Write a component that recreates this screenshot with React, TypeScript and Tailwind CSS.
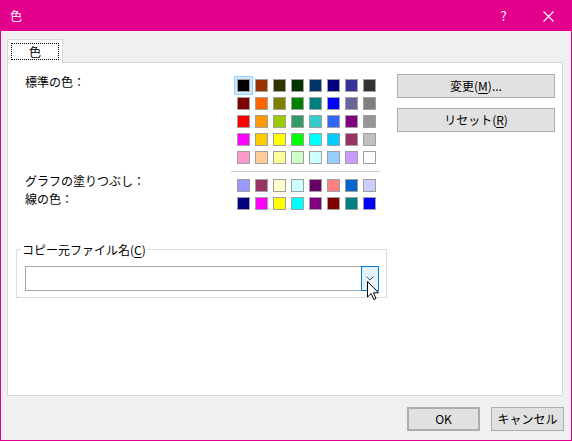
import React from "react";

const standardColors = [
	["#000000", "#993300", "#333300", "#003300", "#003366", "#000080", "#333399", "#333333"],
	["#800000", "#ff6600", "#808000", "#008000", "#008080", "#0000ff", "#666699", "#808080"],
	["#ff0000", "#ff9900", "#99cc00", "#339966", "#33cccc", "#3366ff", "#800080", "#969696"],
	["#ff00ff", "#ffcc00", "#ffff00", "#00ff00", "#00ffff", "#00ccff", "#993366", "#c0c0c0"],
	["#ff99cc", "#ffcc99", "#ffff99", "#ccffcc", "#ccffff", "#99ccff", "#cc99ff", "#ffffff"],
];

const chartColors = [
	["#9999ff", "#993366", "#ffffcc", "#ccffff", "#660066", "#ff8080", "#0066cc", "#ccccff"],
	["#000080", "#ff00ff", "#ffff00", "#00ffff", "#800080", "#800000", "#008080", "#0000ff"],
];

function Swatch({ color, selected }: { color: string; selected?: boolean }) {
	return (
		<div className="relative w-[13px] h-[13px]">
			{selected && (
				<div className="absolute -inset-[3px] border border-[#99d1ff] bg-[#cce8ff]" />
			)}
			<div
				className="relative w-[13px] h-[13px] border border-[#a0a0a0]"
				style={{ backgroundColor: color }}
			/>
		</div>
	);
}

function SwatchRows({ rows, first }: { rows: string[][]; first?: boolean }) {
	return (
		<div className="flex flex-col gap-[5px]">
			{rows.map((row, r) => (
				<div key={r} className="flex gap-[5px]">
					{row.map((c, i) => (
						<Swatch key={i} color={c} selected={first && r === 0 && i === 0} />
					))}
				</div>
			))}
		</div>
	);
}

function Btn({ children, className = "" }: { children: React.ReactNode; className?: string }) {
	return (
		<div
			className={`h-[24px] flex items-center justify-center bg-[#e1e1e1] border border-[#adadad] text-[12px] text-black ${className}`}
		>
			{children}
		</div>
	);
}

export default function App() {
	return (
		<div
			className="w-[572px] h-[441px] border border-[#e3008c] bg-[#f0f0f0] flex flex-col text-[12px] text-black relative"
			style={{ fontFamily: '"Noto Sans CJK JP", "Noto Sans", sans-serif' }}
		>
			{/* title bar */}
			<div className="h-[30px] bg-[#e3008c] flex items-center text-white shrink-0">
				<div className="pl-[9px] flex-1 text-[12px]">色</div>
				<div className="w-[45px] h-full flex items-center justify-center text-[13px]">?</div>
				<div className="w-[45px] h-full flex items-center justify-center">
					<svg width="11" height="11" viewBox="0 0 11 11">
						<path d="M0.5 0.5 L10.5 10.5 M10.5 0.5 L0.5 10.5" stroke="white" strokeWidth="1.1" />
					</svg>
				</div>
			</div>

			{/* tab */}
			<div className="ml-[6px] mt-[8px] w-[56px] h-[24px] bg-white border border-b-0 border-[#d9d9d9] relative z-10 -mb-px p-[3px]">
				<div className="w-full h-full border border-dotted border-black flex items-center justify-center leading-none">
					色
				</div>
			</div>

			{/* panel */}
			<div className="ml-[6px] w-[556px] h-[334px] bg-white border border-[#d9d9d9] shrink-0">
				<div className="flex">
					<div className="w-[223px] pl-[17px] pt-[11px] flex flex-col">
						<div className="leading-[16px]">標準の色：</div>
						<div className="mt-[82px] leading-[18px]">グラフの塗りつぶし：</div>
						<div className="leading-[18px]">線の色：</div>
					</div>
					<div className="w-[149px] pt-[16px] flex flex-col">
						<div className="pl-[6px]">
							<SwatchRows rows={standardColors} first />
						</div>
						<div className="mt-[7px] h-px bg-[#c8c8c8]" />
						<div className="pl-[6px] mt-[7px]">
							<SwatchRows rows={chartColors} />
						</div>
					</div>
					<div className="ml-[17px] w-[158px] pt-[11px] flex flex-col gap-[10px]">
						<Btn>
							変更(<span className="underline underline-offset-2">M</span>)...
						</Btn>
						<Btn>
							リセット(<span className="underline underline-offset-2">R</span>)
						</Btn>
					</div>
				</div>

				{/* group box */}
				<div className="ml-[8px] mt-[39px] w-[371px] h-[49px] border border-[#dcdcdc] relative">
					<div className="absolute -top-[8px] left-[4px] px-px bg-white leading-[16px]">
						コピー元ファイル名(<span className="underline underline-offset-2">C</span>)
					</div>
					<div className="ml-[8px] mt-[16px] w-[354px] h-[25px] border border-[#a8a8a8] flex bg-white">
						<div className="flex-1" />
						<div className="w-[18px] -my-px -mr-px border border-[#0078d7] bg-[#e5f1fb] flex items-center justify-center">
							<svg width="8" height="5" viewBox="0 0 8 5">
								<path d="M0.5 0.5 L4 4 L7.5 0.5" fill="none" stroke="#505050" strokeWidth="1" />
							</svg>
						</div>
					</div>
				</div>
			</div>

			{/* bottom buttons */}
			<div className="mt-[11px] flex justify-end gap-[11px] pr-[7px]">
				<Btn className="w-[73px] border-2 border-[#0078d7]">OK</Btn>
				<Btn className="w-[73px]">キャンセル</Btn>
			</div>

			{/* mouse cursor */}
			<svg
				className="absolute left-[366px] top-[280px] z-20"
				width="13"
				height="20"
				viewBox="0 0 13 20"
			>
				<path
					d="M0.5 0.5 L0.5 16 L4.2 12.5 L6.8 18.5 L9 17.6 L6.5 11.8 L11.5 11.8 Z"
					fill="white"
					stroke="black"
					strokeWidth="1"
					strokeLinejoin="miter"
				/>
			</svg>
		</div>
	);
}
